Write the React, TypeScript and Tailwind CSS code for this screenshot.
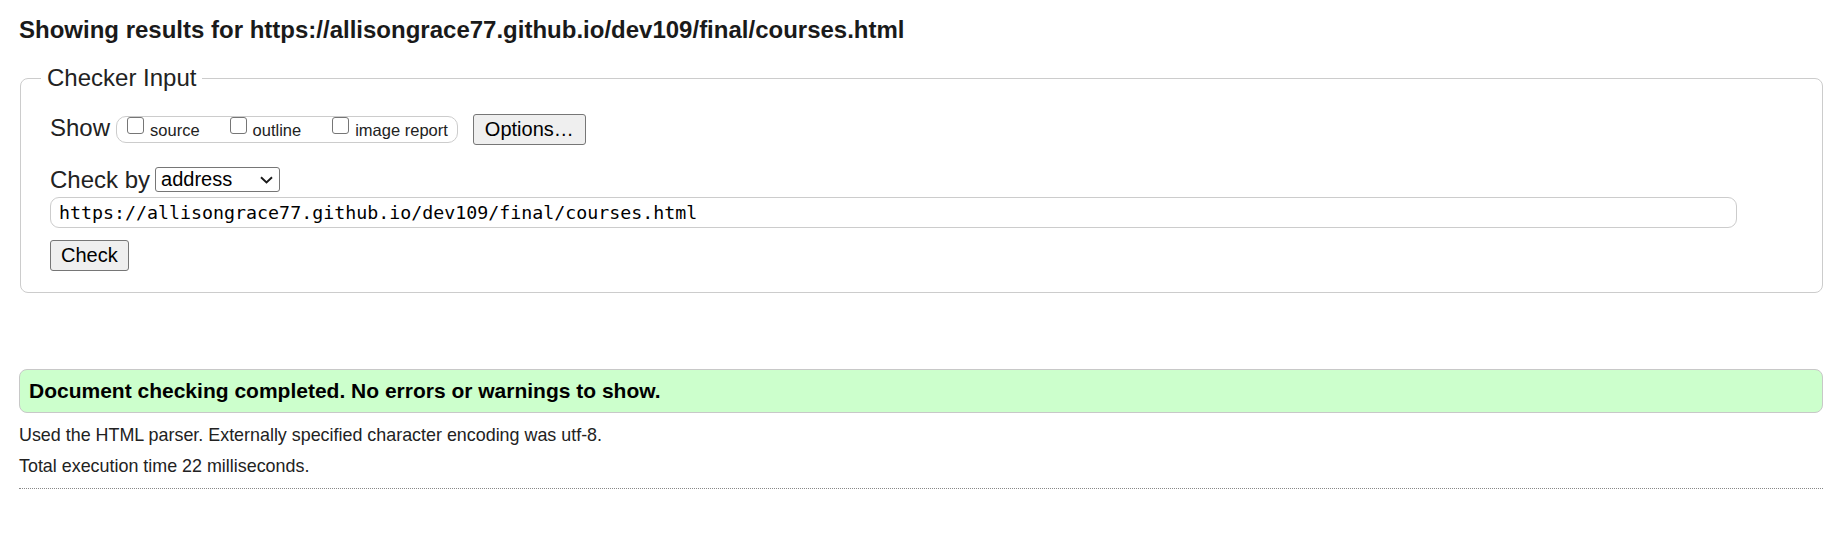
import React from 'react';

const checkOptions = ['source', 'outline', 'image report'];
const pageUrl = 'https://allisongrace77.github.io/dev109/final/courses.html';

const Checkbox = () => (
  <input
    type="checkbox"
    className="m-0 h-[17px] w-[17px] shrink-0 appearance-none rounded-[3px] border border-[#767676] bg-white"
  />
);

const ShowRow = () => (
  <div className="flex h-[31px] items-center">
    <span className="mb-[4px] text-[24px] leading-[28px]">Show</span>
    <div className="ml-[6px] flex h-[27px] items-start rounded-[10px] border border-[#cccccc] pl-[10px] pr-[9px]">
      {checkOptions.map((opt, i) => (
        <label key={opt} className={i === 0 ? 'flex items-start' : i === 1 ? 'ml-[30px] flex items-start' : 'ml-[31px] flex items-start'}>
          <Checkbox />
          <span className="ml-[6px] mt-[4px] text-[16.5px] leading-[19px]">{opt}</span>
        </label>
      ))}
    </div>
    <button className="ml-[15px] h-[31px] rounded-[3px] border border-[#767676] bg-[#efefef] px-[11px] text-[20px] leading-[23px] text-black">
      Options…
    </button>
  </div>
);

const CheckByRow = () => (
  <div className="mt-[21px] flex items-center">
    <span className="text-[24px] leading-[27px]">Check by</span>
    <div className="ml-[5px] flex h-[25px] w-[125px] items-center justify-between rounded-[3px] border border-[#767676] bg-white pl-[5px] pr-[6px] text-[20px] leading-[23px] text-black">
      <span>address</span>
      <svg width="13" height="8" viewBox="0 0 13 8">
        <path d="M1 1.2l5.5 5.3 5.5-5.3" stroke="#1a1a1a" strokeWidth="1.9" fill="none" />
      </svg>
    </div>
  </div>
);

export default function App() {
  return (
    <div className="min-h-[541px] bg-white pl-[19px] pr-[17px] pt-[16px] font-['Liberation_Sans',Arial,sans-serif] text-[#222]">
      <h2 className="text-[24px] font-bold leading-[28px] text-[#1a1a1a]">Showing results for {pageUrl}</h2>

      <fieldset className="ml-[1px] mt-[20px] rounded-[8px] border border-[#cccccc] pb-[21px] pl-[29px] pr-[85px] pt-[22px]">
        <legend className="-ml-[9px] px-[6px] text-[24px] leading-[28px]">Checker Input</legend>
        <ShowRow />
        <CheckByRow />
        <input
          readOnly
          value={pageUrl}
          className="mt-[4px] block h-[31px] w-full rounded-[9px] border border-[#cccccc] bg-white px-[8px] font-['DejaVu_Sans_Mono',monospace] text-[18.3px] text-black outline-none"
        />
        <div className="mt-[12px]">
          <button className="h-[31px] rounded-[3px] border border-[#767676] bg-[#efefef] px-[10px] text-[20px] leading-[23px] text-black">
            Check
          </button>
        </div>
      </fieldset>

      <div className="mt-[76px] flex h-[44px] items-center rounded-[8px] border border-[#c8c8c8] bg-[#ccffcc] pl-[9px]">
        <p className="text-[21px] font-bold leading-[24px] text-black">
          Document checking completed. No errors or warnings to show.
        </p>
      </div>
      <p className="mt-[12px] text-[17.9px] leading-[20px]">
        Used the HTML parser. Externally specified character encoding was utf-8.
      </p>
      <p className="mt-[11px] text-[17.9px] leading-[20px]">Total execution time 22 milliseconds.</p>
      <div className="mt-[12px] border-t border-dotted border-[#888]" />
    </div>
  );
}
